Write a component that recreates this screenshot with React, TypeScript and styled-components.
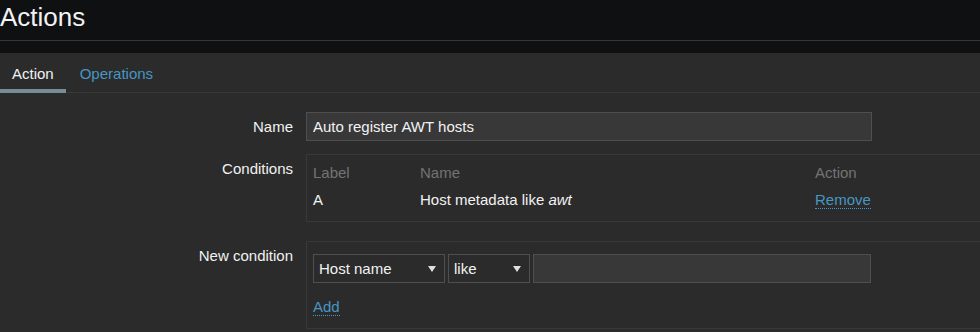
import React from "react"
import styled, { createGlobalStyle } from "styled-components"

const GlobalStyle = createGlobalStyle`
  html, body {
    margin: 0;
    padding: 0;
    background: #0e1012;
    overflow: hidden;
  }
  body {
    font-family: "Liberation Sans", Arial, sans-serif;
    font-size: 15px;
    color: #f2f2f2;
  }
`

const Page = styled.div`
  width: 980px;
  height: 332px;
  overflow: hidden;
`

const Header = styled.header`
  box-sizing: border-box;
  height: 41px;
  border-bottom: 1px solid #383838;
  margin-bottom: 12px;
`

const Title = styled.h1`
  margin: 0;
  font-size: 26px;
  font-weight: normal;
  line-height: 34px;
  color: #f2f2f2;
`

const Panel = styled.div`
  background: #2b2b2b;
  min-height: 300px;
`

const TabBar = styled.div`
  display: flex;
  align-items: flex-start;
  gap: 2px;
  height: 39px;
  border-bottom: 1px solid #383838;
`

const Tab = styled.div<{ $active?: boolean }>`
  box-sizing: border-box;
  height: 40px;
  padding: 5px 12px 0;
  line-height: 31px;
  border-bottom: 4px solid ${(p) => (p.$active ? "#768d99" : "transparent")};
  color: ${(p) => (p.$active ? "#f2f2f2" : "#4796c4")};
  cursor: pointer;
`

const Form = styled.div`
  padding-top: 19px;
`

const Row = styled.div<{ $top?: number }>`
  display: grid;
  grid-template-columns: 293px 1fr;
  column-gap: 13px;
  margin-top: ${(p) => p.$top ?? 0}px;
`

const Label = styled.div`
  text-align: right;
  line-height: 29px;
  white-space: nowrap;
`

const TextInput = styled.input<{ $width: number }>`
  box-sizing: border-box;
  width: ${(p) => p.$width}px;
  height: 29px;
  padding: 0 6px;
  margin: 0;
  background: #383838;
  border: 1px solid #4f4f4f;
  color: #f2f2f2;
  font-family: inherit;
  font-size: 15px;
  outline: none;
`

const Box = styled.div<{ $pad: string }>`
  box-sizing: border-box;
  width: 700px;
  border: 1px solid #383838;
  padding: ${(p) => p.$pad};
`

const CondTable = styled.div`
  display: grid;
  grid-template-columns: 107px 395px 1fr;
  line-height: 27px;
`

const HeadCell = styled.div`
  color: #737373;
`

const Cell = styled.div`
  color: #f2f2f2;
  white-space: nowrap;
`

const Link = styled.span`
  color: #4796c4;
  border-bottom: 1px dotted #4796c4;
  cursor: pointer;
`

const Controls = styled.div`
  display: flex;
  gap: 3px;
`

const Select = styled.div<{ $width: number }>`
  box-sizing: border-box;
  width: ${(p) => p.$width}px;
  height: 29px;
  display: flex;
  align-items: center;
  justify-content: space-between;
  padding: 0 8px 0 5px;
  background: #2b2b2b;
  border: 1px solid #4f4f4f;
  color: #f2f2f2;
`

const Arrow = styled.span`
  width: 0;
  height: 0;
  border-left: 4px solid transparent;
  border-right: 4px solid transparent;
  border-top: 6px solid #e0e0e0;
`

const AddLine = styled.div`
  margin-top: 15px;
  line-height: 18px;
`

export default function App() {
  return (
    <Page>
      <GlobalStyle />
      <Header>
        <Title>Actions</Title>
      </Header>
      <Panel>
        <TabBar>
          <Tab $active>Action</Tab>
          <Tab>Operations</Tab>
        </TabBar>
        <Form>
          <Row>
            <Label>Name</Label>
            <div>
              <TextInput $width={566} defaultValue="Auto register AWT hosts" readOnly />
            </div>
          </Row>
          <Row $top={13}>
            <Label>Conditions</Label>
            <Box $pad="4px 6px 8px">
              <CondTable>
                <HeadCell>Label</HeadCell>
                <HeadCell>Name</HeadCell>
                <HeadCell>Action</HeadCell>
                <Cell>A</Cell>
                <Cell>
                  Host metadata like <i>awt</i>
                </Cell>
                <Cell>
                  <Link>Remove</Link>
                </Cell>
              </CondTable>
            </Box>
          </Row>
          <Row $top={19}>
            <Label>New condition</Label>
            <Box $pad="12px 6px 12px">
              <Controls>
                <Select $width={132}>
                  Host name
                  <Arrow />
                </Select>
                <Select $width={82}>
                  like
                  <Arrow />
                </Select>
                <TextInput $width={338} readOnly />
              </Controls>
              <AddLine>
                <Link>Add</Link>
              </AddLine>
            </Box>
          </Row>
        </Form>
      </Panel>
    </Page>
  )
}
